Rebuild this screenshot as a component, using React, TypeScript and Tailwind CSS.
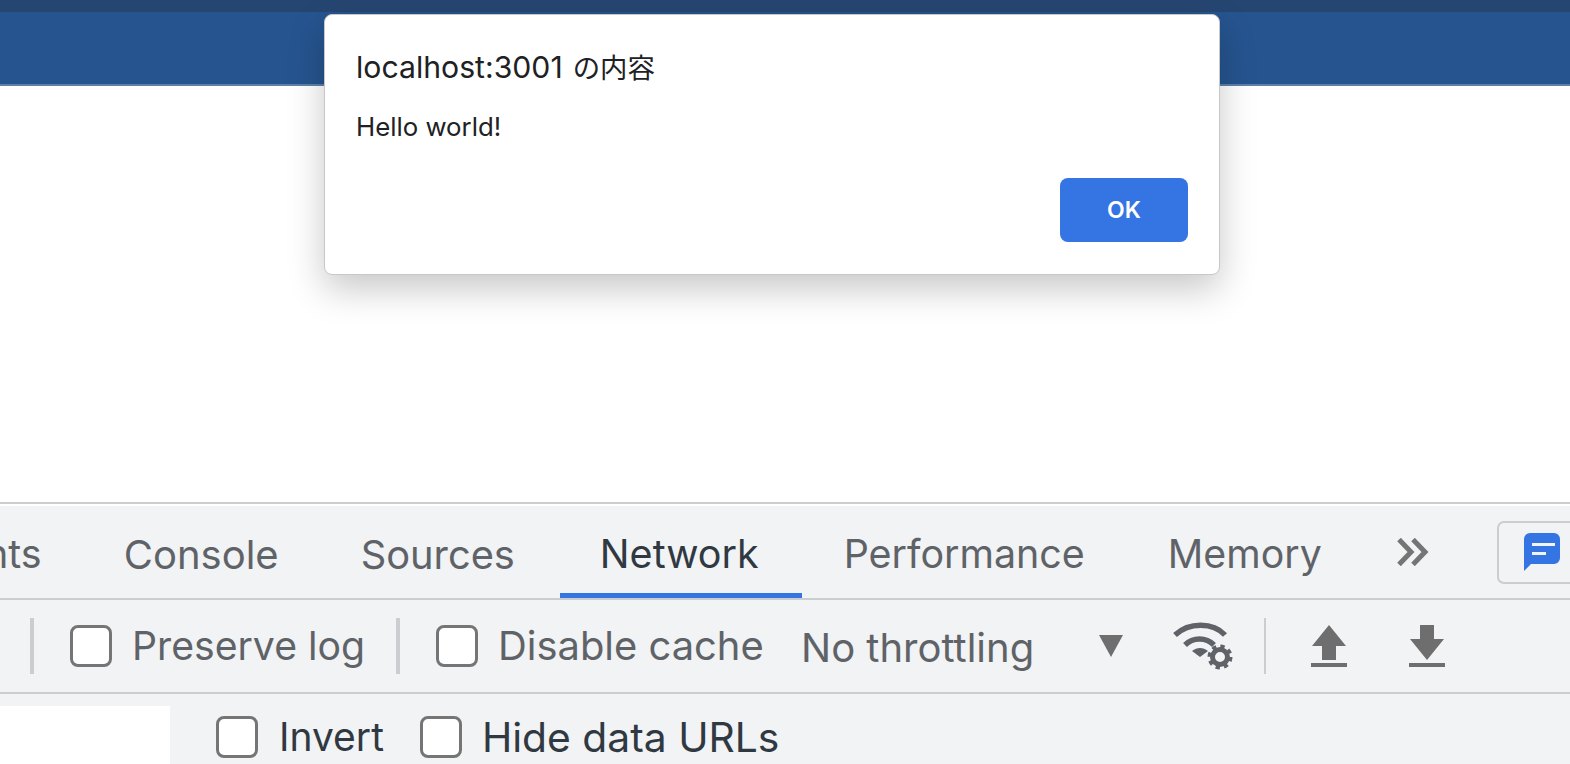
const tabs = [
  { label: 'Console', size: 'text-[40px] px-[41.5px]' },
  { label: 'Sources', size: 'text-[39.8px] -ml-[1px] px-[41.5px]' },
  { label: 'Network', size: 'text-[39.5px] ml-[4px] pl-[39.5px] pr-[43.5px]', active: true },
  { label: 'Performance', size: 'text-[39.4px] px-[41.5px]' },
  { label: 'Memory', size: 'text-[39.3px] px-[41.5px]' },
];

function Check({ className }: { className?: string }) {
  return <span className={`block h-[42px] w-[42px] shrink-0 rounded-[8px] border-[3px] border-[#757575] bg-white ${className ?? ''}`} />;
}

function Divider({ className }: { className?: string }) {
  return <span className={`block h-[56px] shrink-0 bg-[#cbcdd1] ${className ?? ''}`} />;
}

function WifiGear() {
  return (
    <svg width="60" height="48" viewBox="0 0 60 48" fill="none" className="ml-[50px] shrink-0">
      <path d="M2 13 C16 0 40 0 52 13" stroke="#5f6368" strokeWidth="5.5" />
      <path d="M12 23 C20 15 33 15 41 23" stroke="#5f6368" strokeWidth="5.5" />
      <path d="M19 29 L27 35 L35 29 C30 25 24 25 19 29 Z" fill="#5f6368" />
      <circle cx="47" cy="35" r="7.5" stroke="#5f6368" strokeWidth="5" />
      <circle cx="47" cy="35" r="10.5" stroke="#5f6368" strokeWidth="4" strokeDasharray="4.2 4.05" />
    </svg>
  );
}

function Upload() {
  return (
    <svg width="36" height="42" viewBox="0 0 36 42" className="ml-[45px] shrink-0">
      <path d="M18 0 L35 21 L25 21 L25 35 L11 35 L11 21 L1 21 Z" fill="#6e6e6e" />
      <rect x="0" y="38" width="36" height="4" fill="#6e6e6e" />
    </svg>
  );
}

function Download() {
  return (
    <svg width="36" height="42" viewBox="0 0 36 42" className="ml-[62px] shrink-0">
      <path d="M11 0 L25 0 L25 14 L35 14 L18 35 L1 14 L11 14 Z" fill="#6e6e6e" />
      <rect x="0" y="38" width="36" height="4" fill="#6e6e6e" />
    </svg>
  );
}

export default function App() {
  return (
    <div className="relative flex h-[764px] w-[1570px] flex-col overflow-hidden bg-white font-['Inter','Noto_Sans_CJK_JP',sans-serif]">
      <div className="h-[12px] shrink-0 bg-[#264672]" />
      <div className="h-[72px] shrink-0 bg-[#26548f]" />
      <div className="h-[2px] shrink-0 bg-[#5d80ad]" />
      <div className="h-[416px] shrink-0 bg-white" />

      <div className="h-[2px] shrink-0 bg-[#cdcdd0]" />
      <div className="h-[2px] shrink-0 bg-white" />

      {/* tab strip */}
      <div className="flex h-[92px] shrink-0 items-center overflow-hidden bg-[#f1f3f5] text-[#5f6368]">
        <div className="-ml-[129px] pt-[5px] pr-[40.5px] text-[39.5px]">Elements</div>
        {tabs.map((tab) => (
          <div
            key={tab.label}
            className={`flex h-full items-center border-b-[5px] pt-[10px] ${tab.size} ${
              tab.active ? 'border-[#3574e3] text-[#303942]' : 'border-transparent'
            }`}
          >
            {tab.label}
          </div>
        ))}
        <svg width="32" height="28" viewBox="0 0 32 28" fill="none" stroke="#757575" strokeWidth="5" className="ml-[34px] shrink-0">
          <path d="M2 1.5 L14 14 L2 26.5" />
          <path d="M16 1.5 L28 14 L16 26.5" />
        </svg>
        <div className="ml-[68px] flex h-[63px] w-[90px] shrink-0 items-center rounded-[7px] border-2 border-[#cbcdd1] pl-[25px]">
          <svg width="36" height="38" viewBox="0 0 36 38" className="shrink-0">
            <path d="M6 0 H30 A6 6 0 0 1 36 6 V25 A6 6 0 0 1 30 31 H7 L0 38 V6 A6 6 0 0 1 6 0 Z" fill="#3574e3" />
            <rect x="8" y="10" width="23" height="3" fill="#f1f3f5" />
            <rect x="8" y="19" width="14" height="3" fill="#f1f3f5" />
          </svg>
        </div>
      </div>

      <div className="h-[2px] shrink-0 bg-[#cbcdd1]" />

      {/* network toolbar */}
      <div className="flex h-[92px] shrink-0 items-center bg-[#f1f3f5] text-[#5f6368]">
        <Divider className="ml-[30px] w-[4px]" />
        <Check className="ml-[36px]" />
        <span className="ml-[20px] w-[232px] whitespace-nowrap text-[39.2px]">Preserve log</span>
        <Divider className="ml-[32px] w-[4px]" />
        <Check className="ml-[36px]" />
        <span className="ml-[20px] w-[264px] whitespace-nowrap text-[39.9px]">Disable cache</span>
        <span className="ml-[39px] mt-[3px] w-[231px] whitespace-nowrap text-[40px]">No throttling</span>
        <span className="ml-[67px] block h-0 w-0 shrink-0 border-x-[12px] border-t-[22px] border-x-transparent border-t-[#6e6e6e]" />
        <WifiGear />
        <Divider className="ml-[31px] w-[2px]" />
        <Upload />
        <Download />
      </div>

      <div className="h-[2px] shrink-0 bg-[#cbcdd1]" />

      {/* filter row */}
      <div className="flex min-h-0 flex-1 items-start overflow-hidden bg-[#f1f3f5] pt-[12px] text-[#303942]">
        <div className="h-[58px] w-[170px] shrink-0 bg-white" />
        <Check className="ml-[46px] mt-[10px]" />
        <span className="ml-[21px] mt-[7px] whitespace-nowrap text-[39px] leading-[48px]">Invert</span>
        <Check className="ml-[36px] mt-[10px]" />
        <span className="ml-[20px] mt-[7px] whitespace-nowrap text-[40.8px] leading-[48px]">Hide data URLs</span>
      </div>

      {/* alert dialog */}
      <div className="absolute left-[324px] top-[14px] h-[261px] w-[896px] rounded-[8px] border border-[#c8c8c8] bg-white shadow-[0_14px_36px_rgba(0,0,0,0.22)]">
        <div className="ml-[31px] mt-[34px] flex items-baseline leading-[36px] text-[#202124]">
          <span className="text-[30.2px]">localhost:3001</span>
          <span className="ml-[10px] text-[27.4px]">の内容</span>
        </div>
        <div className="ml-[31px] mt-[25px] text-[25.8px] leading-[32px] text-[#202124]">Hello world!</div>
        <div className="absolute bottom-[32px] right-[31px] flex h-[64px] w-[128px] items-center justify-center rounded-[8px] bg-[#3574e3] text-[23px] font-semibold text-white">
          OK
        </div>
      </div>
    </div>
  );
}
